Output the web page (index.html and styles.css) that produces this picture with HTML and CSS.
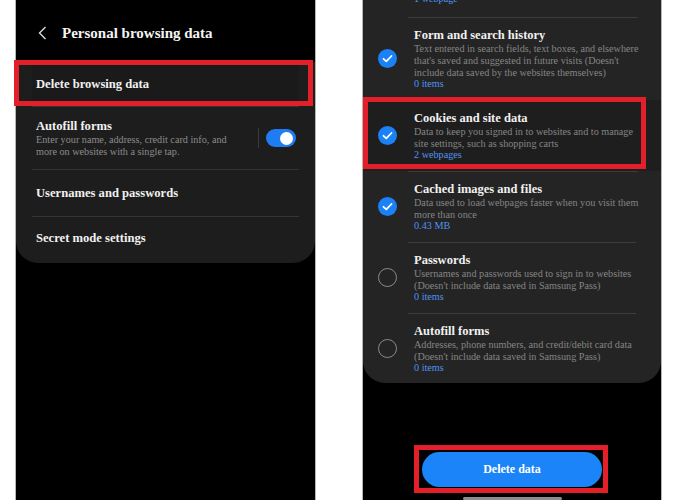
FILE: index.html
```html
<!DOCTYPE html>
<html lang="en">

    <head>
        <meta charset="UTF-8">
        <meta name="viewport" content="width=device-width, initial-scale=1.0">
        <title>Personal browsing data</title>
        <link rel="stylesheet" href="styles.css">
    </head>

    <body>
        <div class="screens">
            <!-- Pantalla izquierda: ajustes -->
            <div class="phone phone-left">
                <header class="topbar">
                    <svg class="back" width="9" height="14" viewBox="0 0 9 14">
                        <path d="M7.5 1 L1.5 7 L7.5 13" fill="none" stroke="#dcdcdc" stroke-width="1.4" />
                    </svg>
                    <h1>Personal browsing data</h1>
                </header>
                <div class="card">
                    <div class="menu-item first">
                        Delete browsing data
                        <span class="mark"></span>
                    </div>
                    <div class="menu-item with-switch">
                        <div class="menu-text">
                            <div class="menu-title">Autofill forms</div>
                            <div class="menu-sub">Enter your name, address, credit card info, and</div>
                            <div class="menu-sub">more on websites with a single tap.</div>
                        </div>
                        <span class="divider"></span>
                        <span class="switch"><span class="knob"></span></span>
                    </div>
                    <div class="menu-item">Usernames and passwords</div>
                    <div class="menu-item last">Secret mode settings</div>
                </div>
            </div>

            <!-- Pantalla derecha: borrar datos -->
            <div class="phone phone-right">
                <div class="card card-options">
                    <div class="peek"><span class="count">1 webpage</span></div>

                    <div class="option">
                        <span class="check on">
                            <svg width="19" height="19" viewBox="0 0 19 19"><path d="M5.5 9.8 L8.3 12.4 L13.5 7" fill="none" stroke="#fff" stroke-width="1.8" stroke-linecap="round" stroke-linejoin="round" /></svg>
                        </span>
                        <div class="option-text">
                            <div class="option-title">Form and search history</div>
                            <div class="option-sub">Text entered in search fields, text boxes, and elsewhere</div>
                            <div class="option-sub">that's saved and suggested in future visits (Doesn't</div>
                            <div class="option-sub">include data saved by the websites themselves)</div>
                            <div class="count">0 items</div>
                        </div>
                    </div>

                    <div class="option highlighted">
                        <span class="check on">
                            <svg width="19" height="19" viewBox="0 0 19 19"><path d="M5.5 9.8 L8.3 12.4 L13.5 7" fill="none" stroke="#fff" stroke-width="1.8" stroke-linecap="round" stroke-linejoin="round" /></svg>
                        </span>
                        <div class="option-text">
                            <div class="option-title">Cookies and site data</div>
                            <div class="option-sub">Data to keep you signed in to websites and to manage</div>
                            <div class="option-sub">site settings, such as shopping carts</div>
                            <div class="count">2 webpages</div>
                        </div>
                        <span class="mark"></span>
                    </div>

                    <div class="option">
                        <span class="check on">
                            <svg width="19" height="19" viewBox="0 0 19 19"><path d="M5.5 9.8 L8.3 12.4 L13.5 7" fill="none" stroke="#fff" stroke-width="1.8" stroke-linecap="round" stroke-linejoin="round" /></svg>
                        </span>
                        <div class="option-text">
                            <div class="option-title">Cached images and files</div>
                            <div class="option-sub">Data used to load webpages faster when you visit them</div>
                            <div class="option-sub">more than once</div>
                            <div class="count">0.43 MB</div>
                        </div>
                    </div>

                    <div class="option">
                        <span class="check"></span>
                        <div class="option-text">
                            <div class="option-title">Passwords</div>
                            <div class="option-sub">Usernames and passwords used to sign in to websites</div>
                            <div class="option-sub">(Doesn't include data saved in Samsung Pass)</div>
                            <div class="count">0 items</div>
                        </div>
                    </div>

                    <div class="option">
                        <span class="check"></span>
                        <div class="option-text">
                            <div class="option-title">Autofill forms</div>
                            <div class="option-sub">Addresses, phone numbers, and credit/debit card data</div>
                            <div class="option-sub">(Doesn't include data saved in Samsung Pass)</div>
                            <div class="count">0 items</div>
                        </div>
                    </div>
                </div>

                <footer class="actions">
                    <button class="delete-btn">Delete data<span class="mark"></span></button>
                    <div class="home-bar"></div>
                </footer>
            </div>
        </div>
    </body>

</html>
```

FILE: styles.css
```css
body {
    margin: 0;
    background: #ffffff;
    font-family: "Liberation Serif", "DejaVu Serif", serif;
    color: #f1f1f1;
}

.screens {
    display: flex;
    height: 500px;
    overflow: hidden;
}

.phone {
    box-sizing: border-box;
    height: 500px;
    background: #000;
    border-left: 1px solid #b5b5b5;
    border-right: 1px solid #b5b5b5;
    display: flex;
    flex-direction: column;
}

.phone-left {
    margin-left: 15px;
    width: 301px;
}

.phone-right {
    margin-left: 46px;
    width: 300px;
}

/* Cabecera */
.topbar {
    height: 62px;
    box-sizing: border-box;
    padding: 4px 0 0 22px;
    display: flex;
    align-items: center;
    gap: 15px;
}

.topbar h1 {
    margin: 0;
    font-size: 15px;
    font-weight: bold;
    color: #f4f4f4;
}

.card {
    background: #1d1d1d;
    border-radius: 0 0 22px 22px;
}

/* Marco rojo de anotación */
.mark {
    position: absolute;
    border: 5px solid #e3202a;
    pointer-events: none;
}

.menu-item {
    position: relative;
    margin: 0 16px;
    padding: 14px 0 14px 4px;
    border-top: 1px solid #343434;
    font-size: 12.6px;
    font-weight: bold;
    line-height: 18px;
    white-space: nowrap;
}

.menu-item.first {
    border-top: none;
    padding: 13px 0 13px 4px;
    background: #1a1a1a;
}

.menu-item.last {
    padding: 12px 0 16px 4px;
}

.menu-item.first .mark {
    top: -2px;
    left: -18px;
    right: -14px;
    bottom: 0;
}

.menu-item.with-switch {
    display: flex;
    align-items: center;
    padding: 11px 0 11px 4px;
}

.menu-text {
    flex: 1;
}

.menu-title {
    line-height: 16px;
}

.menu-sub {
    font-size: 10.2px;
    font-weight: normal;
    line-height: 12px;
    color: #8c8c8c;
}

.divider {
    width: 1px;
    height: 20px;
    background: #3a3a3a;
    margin-right: 7px;
}

.switch {
    width: 30px;
    height: 18px;
    border-radius: 9px;
    background: #1f7df1;
    margin-right: 3px;
    display: flex;
    align-items: center;
    justify-content: flex-end;
}

.knob {
    width: 13px;
    height: 13px;
    border-radius: 50%;
    background: #fff;
    margin-right: 3px;
}

/* Lista de opciones */
.card-options {
    background: #242424;
    margin-top: -8px;
}

.peek {
    padding: 0 0 13px 51px;
    line-height: 10px;
}

.count {
    font-size: 10.2px;
    line-height: 10px;
    color: #4f93f2;
}

.option {
    position: relative;
    display: flex;
    align-items: center;
}

.option.highlighted {
    background: #1e1e1e;
}

.option.highlighted .mark {
    top: -3px;
    left: 0;
    right: 15px;
    bottom: 2px;
}

.check {
    flex: none;
    box-sizing: border-box;
    width: 19px;
    height: 19px;
    margin: 0 11px 0 15px;
    border-radius: 50%;
    border: 1.5px solid #8a8a8a;
}

.check.on {
    border: none;
    background: #1a82f6;
}

.check svg {
    display: block;
}

.option-text {
    flex: 1;
    margin-right: 25px;
    padding: 9px 0 11px 6px;
    border-top: 1px solid #3c3c3c;
    white-space: nowrap;
}

.option:last-child .option-text {
    padding-bottom: 10px;
}

.option-title {
    font-size: 12.5px;
    font-weight: bold;
    line-height: 16px;
}

.option-sub {
    font-size: 10.2px;
    line-height: 12px;
    color: #858585;
}

/* Botón inferior */
.actions {
    margin-top: auto;
    display: flex;
    flex-direction: column;
    align-items: center;
}

.delete-btn {
    position: relative;
    width: 180px;
    height: 35px;
    border: none;
    border-radius: 18px;
    background: #1a84f8;
    color: #fff;
    font-family: inherit;
    font-size: 12px;
    font-weight: bold;
}

.delete-btn .mark {
    top: -7px;
    bottom: -6px;
    left: -8px;
    right: -6px;
}

.home-bar {
    width: 99px;
    height: 3px;
    margin-top: 10px;
    border-radius: 2px;
    background: #8d8d8d;
}
```
